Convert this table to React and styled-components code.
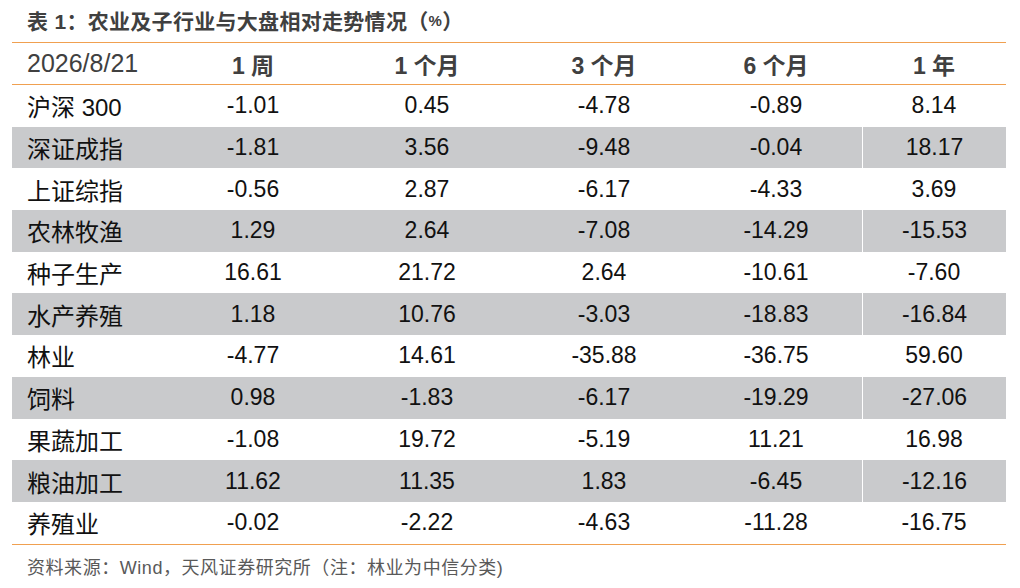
import React from 'react';
import styled, { createGlobalStyle } from 'styled-components';

const GlobalStyle = createGlobalStyle`
  body {
    margin: 0;
    background: #fff;
    font-family: "Liberation Sans", Arial, "Noto Sans CJK SC", sans-serif;
  }
`;

const Page = styled.div`
  width: 1020px;
  height: 588px;
  padding: 0 14px 0 12px;
  box-sizing: border-box;
  background: #fff;
`;

const Title = styled.h1`
  margin: 0;
  height: 42px;
  padding: 0 0 2px 15px;
  display: flex;
  align-items: center;
  box-sizing: border-box;
  font-size: 21px;
  font-weight: 700;
  color: #404040;
  letter-spacing: 0.3px;
`;

const Small = styled.span`
  font-size: 15px;
`;

const Table = styled.div`
  display: grid;
  grid-template-columns: 158px 166px 182px 172px 172px 144px;
  border-top: 1.5px solid #f0a050;
  border-bottom: 1.5px solid #f0a050;
`;

const Row = styled.div`
  display: contents;
`;

const Cell = styled.div`
  height: ${(p) => (p.$head ? '42px' : '41.7px')};
  display: flex;
  align-items: center;
  justify-content: ${(p) => (p.$first ? 'flex-start' : 'center')};
  padding-left: ${(p) => (p.$first ? '15px' : '0')};
  font-size: ${(p) => (p.$first && !p.$head ? '24px' : '23px')};
  font-weight: ${(p) => (p.$head ? 700 : 400)};
  color: ${(p) => (p.$head ? '#404040' : '#111')};
  background: ${(p) => (p.$grey ? '#c9cacc' : '#fff')};
  border-bottom: ${(p) => (p.$head ? '1.5px solid #f0a050' : 'none')};
  border-left: ${(p) => (p.$split && p.$grey ? '1px solid #fff' : 'none')};
  box-sizing: border-box;
  white-space: nowrap;
`;

const HeadDate = styled.span`
  font-size: 25px;
  font-weight: 400;
`;

const Source = styled.p`
  margin: 0;
  padding: 8px 0 0 15px;
  font-size: 18px;
  letter-spacing: 0.55px;
  color: #595959;
`;

const headers = ['1 周', '1 个月', '3 个月', '6 个月', '1 年'];

const rows = [
  ['沪深 300', '-1.01', '0.45', '-4.78', '-0.89', '8.14'],
  ['深证成指', '-1.81', '3.56', '-9.48', '-0.04', '18.17'],
  ['上证综指', '-0.56', '2.87', '-6.17', '-4.33', '3.69'],
  ['农林牧渔', '1.29', '2.64', '-7.08', '-14.29', '-15.53'],
  ['种子生产', '16.61', '21.72', '2.64', '-10.61', '-7.60'],
  ['水产养殖', '1.18', '10.76', '-3.03', '-18.83', '-16.84'],
  ['林业', '-4.77', '14.61', '-35.88', '-36.75', '59.60'],
  ['饲料', '0.98', '-1.83', '-6.17', '-19.29', '-27.06'],
  ['果蔬加工', '-1.08', '19.72', '-5.19', '11.21', '16.98'],
  ['粮油加工', '11.62', '11.35', '1.83', '-6.45', '-12.16'],
  ['养殖业', '-0.02', '-2.22', '-4.63', '-11.28', '-16.75'],
];

export default function App() {
  return (
    <Page>
      <GlobalStyle />
      <Title>
        表 1：农业及子行业与大盘相对走势情况（<Small>%</Small>）
      </Title>
      <Table>
        <Row>
          <Cell $head $first>
            <HeadDate>2026/8/21</HeadDate>
          </Cell>
          {headers.map((h) => (
            <Cell $head key={h}>
              {h}
            </Cell>
          ))}
        </Row>
        {rows.map((r, i) => (
          <Row key={r[0]}>
            {r.map((v, j) => (
              <Cell
                key={j}
                $first={j === 0}
                $grey={i % 2 === 1}
                $split={j === 5}
              >
                {v}
              </Cell>
            ))}
          </Row>
        ))}
      </Table>
      <Source>资料来源：Wind，天风证券研究所（注：林业为中信分类)</Source>
    </Page>
  );
}
